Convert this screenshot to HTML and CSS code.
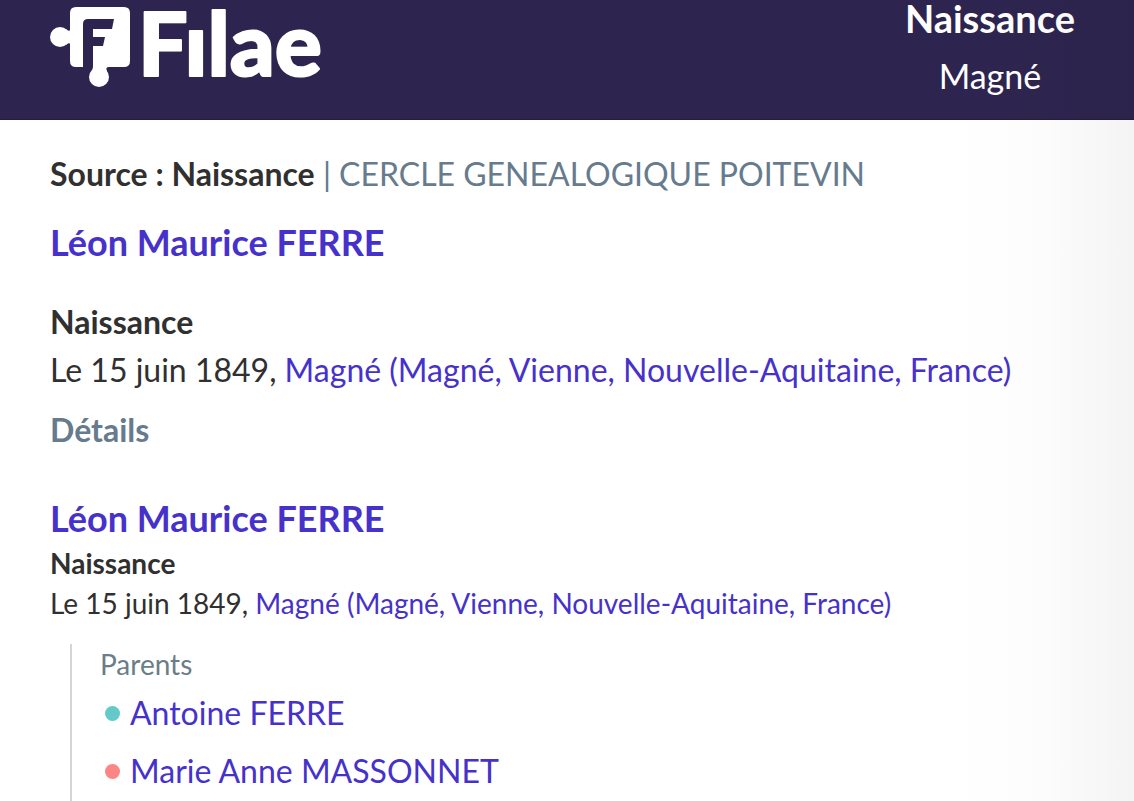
FILE: index.html
```
<!DOCTYPE html>
<html lang="fr">
<head>
    <meta charset="UTF-8">
    <meta name="viewport" content="width=device-width, initial-scale=1.0">
    <title>Filae - Naissance</title>
    <link rel="stylesheet" href="styles.css">
</head>
<body>
    <header class="header">
        <a href="#" class="logo" aria-label="Filae">
            <svg width="274" height="88" viewBox="50 0 274 88">
                <circle cx="60" cy="37" r="10"/>
                <path d="M66 29Q68 32 71 30V44Q68 42 66 45Z"/>
                <path d="M76 7H124Q130 7 130 13V61Q130 67 124 67H109Q105 67 107 71L103 75H95L92 71L93 67V46H103L105 37H93V29H112L114 19H88Q83 19 83 24V67H76Q70 67 70 61V13Q70 7 76 7Z"/>
                <circle cx="99" cy="77" r="10"/>
                <text class="logo-text" x="138" y="76">Fılae</text>
            </svg>
        </a>
        <div class="record">
            <h1 class="record-type">Naissance</h1>
            <p class="record-place">Magné</p>
        </div>
    </header>

    <main class="content">
        <p class="source"><strong>Source : Naissance</strong> | CERCLE GENEALOGIQUE POITEVIN</p>

        <section class="person">
            <h2 class="name"><a href="#">Léon Maurice FERRE</a></h2>
            <div class="event">
                <h3>Naissance</h3>
                <p>Le 15 juin 1849, <a href="#">Magné (Magné, Vienne, Nouvelle-Aquitaine, France)</a></p>
            </div>
        </section>

        <h3 class="details">Détails</h3>

        <section class="person-details">
            <h2 class="name"><a href="#">Léon Maurice FERRE</a></h2>
            <div class="event-small">
                <h3>Naissance</h3>
                <p>Le 15 juin 1849, <a href="#">Magné (Magné, Vienne, Nouvelle-Aquitaine, France)</a></p>
            </div>
            <div class="family">
                <h4>Parents</h4>
                <ul>
                    <li class="father"><a href="#">Antoine FERRE</a></li>
                    <li class="mother"><a href="#">Marie Anne MASSONNET</a></li>
                </ul>
            </div>
        </section>
    </main>
    <div class="side-shadow"></div>
</body>
</html>
```
FILE: styles.css
```
* {
    box-sizing: border-box;
}

body {
    position: relative;
    margin: 0;
    background-color: white;
    color: #303030;
    font-family: Lato, sans-serif;
    font-size: 32px;
    line-height: 48px;
}

h1, h2, h3, h4, p, ul {
    margin: 0;
    padding: 0;
}

a {
    color: #4632cb;
    text-decoration: none;
}

.header {
    display: flex;
    justify-content: space-between;
    align-items: flex-start;
    padding: 0 59px 25px 50px;
    background-color: #2d254f;
    border-bottom: 1px solid #291d3e;
    color: white;
}

.logo svg {
    display: block;
    overflow: visible;
    fill: white;
}

.logo-text {
    font-size: 88px;
    font-weight: 900;
    stroke: white;
    stroke-width: 2px;
    stroke-linejoin: round;
}

.record {
    display: flex;
    flex-direction: column;
    gap: 22px;
    text-align: center;
}

.record-type {
    font-size: 38px;
    line-height: 36px;
}

.record-place {
    font-size: 34px;
    line-height: 36px;
}

.content {
    padding: 30px 50px 0;
}

.source {
    margin-bottom: 19px;
    color: #667b8d;
}

.source strong {
    color: #303030;
}

.name {
    font-size: 36px;
    line-height: 50px;
}

.event {
    margin-top: 31px;
}

.event h3, .details {
    font-size: 32px;
}

.details {
    margin-top: 12px;
    color: #667b8d;
}

.person-details {
    margin-top: 39px;
}

.event-small, .event-small h3 {
    font-size: 28px;
    line-height: 40px;
}

.family {
    margin: 21px 0 0 20px;
    padding-left: 28px;
    border-left: 2px solid #d5d5d5;
}

.family h4 {
    color: #6b7d89;
    font-size: 28px;
    font-weight: 400;
    line-height: 40px;
}

.family ul {
    padding-bottom: 1px;
    list-style: none;
}

.family li {
    display: flex;
    align-items: center;
    gap: 10px;
    padding-left: 5px;
    line-height: 58px;
}

.family li::before {
    content: "";
    width: 15px;
    height: 15px;
    border-radius: 50%;
}

.father::before {
    background-color: #63c9c9;
}

.mother::before {
    background-color: #fc8585;
}

/* soft shade down the right edge of the page */
.side-shadow {
    position: absolute;
    top: 0;
    right: 0;
    bottom: 0;
    width: 180px;
    background: linear-gradient(to right, transparent, rgba(0, 0, 0, 0.01) 50%, rgba(0, 0, 0, 0.045));
    pointer-events: none;
}
```
